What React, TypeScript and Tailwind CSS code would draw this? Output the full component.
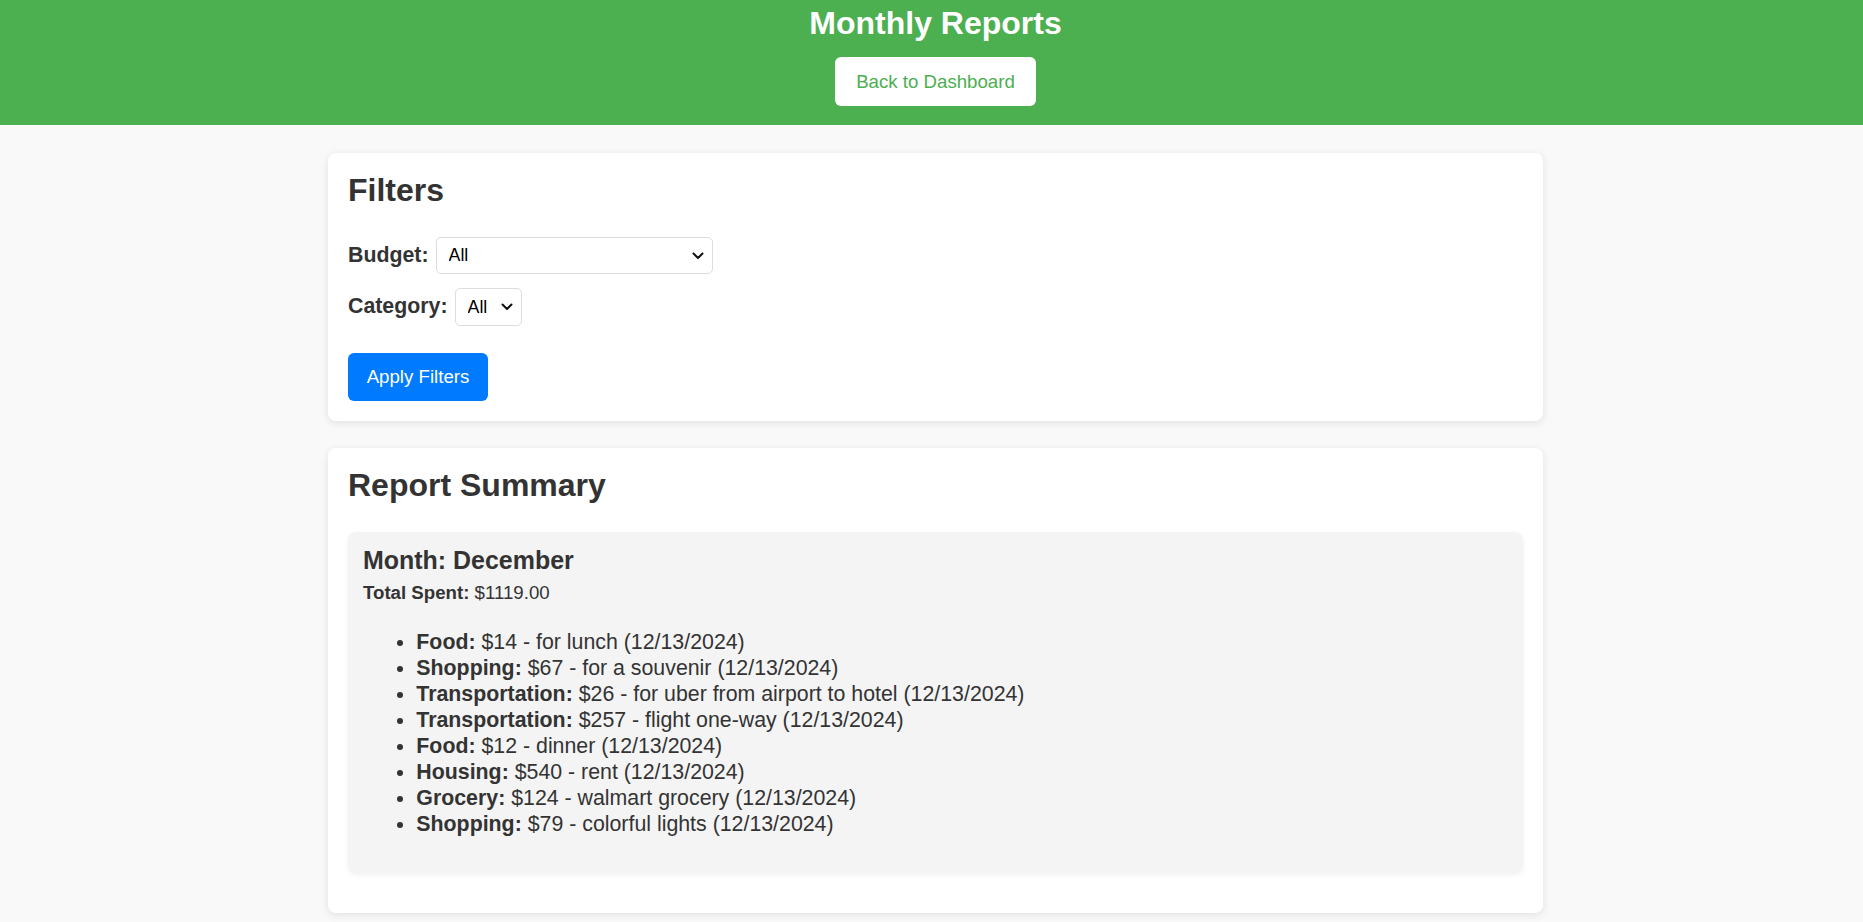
import React from "react";

const Chevron = () => (
  <svg width="12" height="8" viewBox="0 0 12 8" className="pointer-events-none absolute top-1/2 -translate-y-1/2 right-[9px]" fill="none">
    <path d="M1.5 1.5L6 6L10.5 1.5" stroke="#111" strokeWidth="2" strokeLinecap="round" strokeLinejoin="round" />
  </svg>
);

const items = [
  ["Food:", "$14 - for lunch (12/13/2024)"],
  ["Shopping:", "$67 - for a souvenir (12/13/2024)"],
  ["Transportation:", "$26 - for uber from airport to hotel (12/13/2024)"],
  ["Transportation:", "$257 - flight one-way (12/13/2024)"],
  ["Food:", "$12 - dinner (12/13/2024)"],
  ["Housing:", "$540 - rent (12/13/2024)"],
  ["Grocery:", "$124 - walmart grocery (12/13/2024)"],
  ["Shopping:", "$79 - colorful lights (12/13/2024)"],
];

export default function App() {
  return (
    <div className="min-h-screen bg-[#f9f9f9] text-[#333] font-['Liberation_Sans',Arial,sans-serif]">
      <header className="bg-[#4caf50] h-[125px] pt-[5px] pl-[8px] flex flex-col items-center">
        <h1 className="text-white text-[32px] leading-[37px] font-bold">Monthly Reports</h1>
        <button className="mt-[15px] h-[49px] w-[201px] bg-white text-[#4caf50] text-[18.67px] rounded-[6px] flex items-center justify-center">
          Back to Dashboard
        </button>
      </header>
      <main className="pl-[8px] pt-[28px] pb-[10px] flex flex-col items-center gap-[27px]">
        <section className="w-[1215px] bg-white rounded-[8px] shadow-[0_2px_8px_rgba(0,0,0,0.1)] p-[20px]">
          <h2 className="text-[32px] leading-[34px] font-bold">Filters</h2>
          <div className="mt-[30px] flex items-center gap-[7px]">
            <label className="text-[21.33px] font-bold">Budget:</label>
            <div className="relative">
              <select className="appearance-none w-[277px] h-[37px] border border-[#ddd] rounded-[5px] bg-white pl-[12px] text-[17.78px] text-black">
                <option>All</option>
              </select>
              <Chevron />
            </div>
          </div>
          <div className="mt-[14px] flex items-center gap-[7px]">
            <label className="text-[21.33px] font-bold">Category:</label>
            <div className="relative">
              <select className="appearance-none w-[67px] h-[38px] border border-[#ddd] rounded-[5px] bg-white pl-[12px] text-[17.78px] text-black">
                <option>All</option>
              </select>
              <Chevron />
            </div>
          </div>
          <button className="mt-[27px] w-[140px] h-[48px] bg-[#007bff] text-white text-[18.67px] rounded-[6px] flex items-center justify-center">
            Apply Filters
          </button>
        </section>
        <section className="w-[1215px] bg-white rounded-[8px] shadow-[0_2px_8px_rgba(0,0,0,0.1)] p-[20px]">
          <h2 className="text-[32px] leading-[34px] font-bold">Report Summary</h2>
          <div className="mt-[30px] mb-[20px] bg-[#f4f4f4] rounded-[8px] shadow-[0_2px_5px_rgba(0,0,0,0.06)] pt-[14px] pb-[15px] px-[15px]">
            <h3 className="text-[24.96px] leading-[29px] font-bold">Month: December</h3>
            <p className="mt-[7px] text-[18.67px] leading-[21px]">
              <strong>Total Spent:</strong> $1119.00
            </p>
            <ul className="mt-[25.6px] mb-[21.33px] list-disc pl-[53.33px] text-[21.33px] leading-[26px]">
              {items.map(([k, v], i) => (
                <li key={i}>
                  <strong>{k}</strong> {v}
                </li>
              ))}
            </ul>
          </div>
        </section>
      </main>
    </div>
  );
}
